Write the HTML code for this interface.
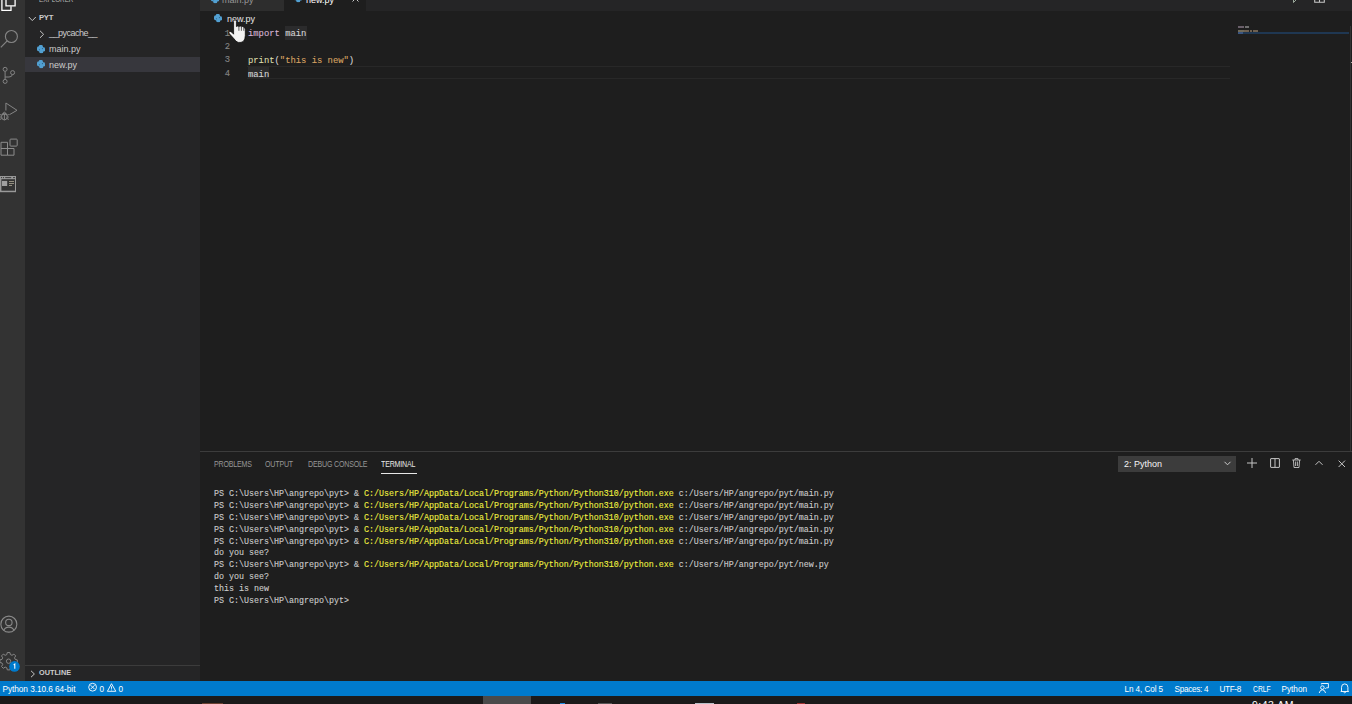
<!DOCTYPE html>
<html><head><meta charset="utf-8">
<style>
*{margin:0;padding:0;box-sizing:border-box}
html,body{width:1352px;height:704px;overflow:hidden;background:#1e1e1e}
body{position:relative;font-family:"Liberation Sans",sans-serif;color:#cccccc}
.a{position:absolute}
.t{position:absolute;white-space:pre;line-height:1}
.mono{font-family:"Liberation Mono",monospace;-webkit-text-stroke:0.1px}
svg{position:absolute;overflow:visible}
</style></head><body>

<!-- activity bar -->
<div class="a" style="left:0;top:0;width:25px;height:681px;background:#333333"></div>

<!-- sidebar -->
<div class="a" style="left:25px;top:0;width:175px;height:681px;background:#252526"></div>
<div class="t" style="left:39px;top:-4.2px;font-size:8px;color:#bbbbbb;letter-spacing:0px;transform:scaleX(0.79);transform-origin:0 0">EXPLORER</div>
<!-- PYT -->
<svg style="left:28px;top:16px" width="9" height="6" viewBox="0 0 9 6"><path d="M0.8 1 L4.3 4.6 L7.8 1" fill="none" stroke="#c5c5c5" stroke-width="1"/></svg>
<div class="t" style="left:39px;top:13.9px;font-size:7.7px;font-weight:bold;letter-spacing:-0.3px;color:#cccccc">PYT</div>
<!-- pycache -->
<svg style="left:39px;top:30px" width="6" height="9" viewBox="0 0 6 9"><path d="M1 0.8 L4.6 4.3 L1 7.8" fill="none" stroke="#c5c5c5" stroke-width="1"/></svg>
<div class="t" style="left:49px;top:29.3px;font-size:9px;letter-spacing:-0.5px">__pycache__</div>
<!-- main.py -->
<div class="t" style="left:49px;top:45.2px;font-size:9px">main.py</div>
<div class="a" style="left:25px;top:56.5px;width:175px;height:15.5px;background:#37373d"></div>
<div class="t" style="left:49px;top:60.7px;font-size:9px">new.py</div>

<!-- outline header -->
<div class="a" style="left:25px;top:665px;width:175px;height:1px;background:#3c3c3c"></div>
<svg style="left:30px;top:670px" width="6" height="9" viewBox="0 0 6 9"><path d="M1 0.8 L4.4 4 L1 7.2" fill="none" stroke="#c5c5c5" stroke-width="1"/></svg>
<div class="t" style="left:39px;top:669.2px;font-size:7.3px;font-weight:bold;color:#cccccc">OUTLINE</div>

<!-- editor tab bar -->
<div class="a" style="left:200px;top:0;width:1152px;height:10.5px;background:#252526"></div>
<div class="a" style="left:200px;top:0;width:83.5px;height:10.5px;background:#2d2d2d"></div>
<div class="a" style="left:283.5px;top:0;width:82px;height:10.5px;background:#1e1e1e"></div>
<div class="t" style="left:222px;top:-3.8px;font-size:9px;color:#969696">main.py</div>
<div class="t" style="left:306px;top:-3.8px;font-size:9px;color:#ffffff">new.py</div>

<!-- breadcrumbs -->
<div class="t" style="left:227px;top:15px;font-size:9px;color:#e6e6e6">new.py</div>

<!-- code -->
<div class="a" style="left:247px;top:66px;width:983px;height:13px;border-top:1px solid #282828;border-bottom:1px solid #282828"></div>
<div class="a" style="left:285px;top:26.2px;width:22px;height:13.4px;background:#2b2b2c"></div>
<div class="a" style="left:248px;top:66.8px;width:21px;height:11.6px;background:#2b2b2c"></div>
<div class="mono a" style="left:200px;top:27.6px;width:30px;font-size:8.85px;line-height:13.4px;text-align:right;color:#858585;white-space:pre">1
2
3
4</div>
<div class="mono a" style="left:248px;top:28.3px;font-size:8.85px;line-height:13.4px;color:#d4d4d4;white-space:pre"><span style="color:#d8b4d6">import</span> <span style="color:#d4d4d4">main</span>

<span style="color:#dcdcaa">print</span>(<span style="color:#d8a262">"this is new"</span>)
main</div>

<!-- minimap -->
<div class="a" style="left:1238px;top:26px;width:6px;height:2px;background:#6a5f6a"></div>
<div class="a" style="left:1245px;top:26px;width:4px;height:2px;background:#6f6f6f"></div>
<div class="a" style="left:1238px;top:29.7px;width:6px;height:2.2px;background:#6f6a5a"></div>
<div class="a" style="left:1244px;top:29.7px;width:5px;height:2.2px;background:#6e6050"></div>
<div class="a" style="left:1250px;top:29.7px;width:2px;height:2.2px;background:#6e6050"></div>
<div class="a" style="left:1253px;top:29.7px;width:5px;height:2.2px;background:#6e6050"></div>
<div class="a" style="left:1238px;top:32px;width:111px;height:1.9px;background:#1f3752"></div>
<div class="a" style="left:1238px;top:32px;width:5px;height:1.9px;background:#3a5580"></div>
<div class="a" style="left:1350px;top:26px;width:1.4px;height:425px;background:#333333"></div>
<div class="a" style="left:1350.8px;top:61.8px;width:1.2px;height:1.4px;background:#b0b0a8"></div>

<!-- panel -->
<div class="a" style="left:200px;top:451px;width:1152px;height:1px;background:#3c3c3c"></div>
<div class="t" style="left:214px;top:460.2px;font-size:8.3px;letter-spacing:-0.2px;transform:scaleX(0.85);transform-origin:0 0;color:#969696">PROBLEMS</div>
<div class="t" style="left:265px;top:460.2px;font-size:8.3px;letter-spacing:-0.2px;transform:scaleX(0.85);transform-origin:0 0;color:#969696">OUTPUT</div>
<div class="t" style="left:308px;top:460.2px;font-size:8.3px;letter-spacing:-0.2px;transform:scaleX(0.85);transform-origin:0 0;color:#969696">DEBUG CONSOLE</div>
<div class="t" style="left:381px;top:460.2px;font-size:8.3px;letter-spacing:-0.2px;transform:scaleX(0.85);transform-origin:0 0;color:#e7e7e7">TERMINAL</div>
<div class="a" style="left:381px;top:472.5px;width:36px;height:1.4px;background:#e7e7e7"></div>

<div class="a" style="left:1118px;top:456px;width:118px;height:16px;background:#3c3c3c"></div>
<div class="t" style="left:1124px;top:460.2px;font-size:9px;color:#f4f4f4">2: Python</div>

<!-- terminal -->
<div class="mono a" style="left:214px;top:489px;font-size:8.33px;line-height:11.88px;color:#cccccc;white-space:pre">PS C:\Users\HP\angrepo\pyt&gt; &amp; <span style="color:#f0f040">C:/Users/HP/AppData/Local/Programs/Python/Python310/python.exe</span> c:/Users/HP/angrepo/pyt/main.py
PS C:\Users\HP\angrepo\pyt&gt; &amp; <span style="color:#f0f040">C:/Users/HP/AppData/Local/Programs/Python/Python310/python.exe</span> c:/Users/HP/angrepo/pyt/main.py
PS C:\Users\HP\angrepo\pyt&gt; &amp; <span style="color:#f0f040">C:/Users/HP/AppData/Local/Programs/Python/Python310/python.exe</span> c:/Users/HP/angrepo/pyt/main.py
PS C:\Users\HP\angrepo\pyt&gt; &amp; <span style="color:#f0f040">C:/Users/HP/AppData/Local/Programs/Python/Python310/python.exe</span> c:/Users/HP/angrepo/pyt/main.py
PS C:\Users\HP\angrepo\pyt&gt; &amp; <span style="color:#f0f040">C:/Users/HP/AppData/Local/Programs/Python/Python310/python.exe</span> c:/Users/HP/angrepo/pyt/main.py
do you see?
PS C:\Users\HP\angrepo\pyt&gt; &amp; <span style="color:#f0f040">C:/Users/HP/AppData/Local/Programs/Python/Python310/python.exe</span> c:/Users/HP/angrepo/pyt/new.py
do you see?
this is new
PS C:\Users\HP\angrepo\pyt&gt;</div>

<!-- icons -->
<svg width="0" height="0" style="left:0;top:0"><defs>
<symbol id="py" viewBox="0 0 8 8.4">
<g fill="#52a0d2"><rect x="1.8" y="0" width="4" height="4.4" rx="1.3"/><rect x="0" y="1.6" width="4.6" height="4.6" rx="1.4"/><rect x="3.4" y="2.2" width="4.6" height="4.4" rx="1.4"/><rect x="2.3" y="4" width="3.9" height="4.3" rx="1.3"/><rect x="2.2" y="1.8" width="3.8" height="4.8"/></g>
<circle cx="2.4" cy="4.8" r="0.55" fill="#2a5a7e"/><circle cx="5.4" cy="3.6" r="0.55" fill="#2a5a7e"/>
</symbol>
</defs></svg>
<svg style="left:36.8px;top:44.8px" width="8" height="8.4"><use href="#py"/></svg>
<svg style="left:36.8px;top:60.3px" width="8" height="8.4"><use href="#py"/></svg>
<svg style="left:214.2px;top:13.8px" width="8" height="8.4"><use href="#py"/></svg>
<svg style="left:210.5px;top:-5px" width="8" height="8.4"><use href="#py"/></svg>
<svg style="left:294px;top:-6.3px" width="8" height="8.4"><use href="#py"/></svg>
<!-- tab close -->
<svg style="left:352px;top:-5.5px" width="7" height="7" viewBox="0 0 7 7"><path d="M0.5 0.5 L6.5 6.5 M6.5 0.5 L0.5 6.5" stroke="#cccccc" stroke-width="1"/></svg>
<!-- top right run & split -->
<svg style="left:1293px;top:-6px" width="5" height="9" viewBox="0 0 5 9"><path d="M0.5 0.5 L4.5 4.5 L0.5 8.5 Z" fill="none" stroke="#a8b8a8" stroke-width="0.9"/></svg>
<svg style="left:1314px;top:-8px" width="11" height="11" viewBox="0 0 11 11"><path d="M0.7 0.7 H10.3 V10.3 H0.7 Z M5.5 0.7 V10.3" fill="none" stroke="#c5c5c5" stroke-width="1.1"/></svg>

<!-- activity bar icons -->
<svg style="left:0;top:0" width="18" height="12" viewBox="0 0 18 12"><path d="M1.9 -2 V10.4 H11 V6.3" fill="none" stroke="#ffffff" stroke-width="1.3"/><path d="M6 -2 V5.9 H15.1 V-2" fill="none" stroke="#ffffff" stroke-width="1.3"/></svg>
<svg style="left:0;top:29px" width="19" height="20" viewBox="0 0 19 20"><circle cx="11.4" cy="7.5" r="6" fill="none" stroke="#858585" stroke-width="1.1"/><path d="M7.2 11.8 L0.8 18.4" stroke="#858585" stroke-width="1.2"/></svg>
<svg style="left:0;top:65px" width="17" height="20" viewBox="0 0 17 20"><g fill="none" stroke="#858585" stroke-width="1"><circle cx="5.1" cy="4.3" r="2"/><circle cx="12.6" cy="7.6" r="2"/><circle cx="5.1" cy="16.4" r="2"/><path d="M5.1 6.3 V14.4 M12.4 9.6 Q12 12 9 12 H5.1"/></g></svg>
<svg style="left:0;top:101px" width="19" height="21" viewBox="0 0 19 21"><g fill="none" stroke="#858585" stroke-width="1"><path d="M5.9 9.5 V2 L17 9.3 L9.4 13.7"/><path d="M2.6 12.6 Q4.4 9.8 6.2 12.6"/><ellipse cx="4.4" cy="15.6" rx="2.8" ry="3.4"/><path d="M0 13.6 L1.7 14.2 M0 16 H1.6 M0 18.4 L1.8 17.6 M8.8 13.6 L7.1 14.2 M8.8 16 H7.2 M8.8 18.4 L7 17.6 M4.4 13 V18.8 M1.8 13.3 H7"/></g></svg>
<svg style="left:0;top:138px" width="19" height="19" viewBox="0 0 19 19"><g fill="none" stroke="#8c8c8c" stroke-width="1"><path d="M1 4.3 H7.5 V17.2 H1 Z M1 10.5 H14 V17.2 H7.5"/><rect x="10" y="1.1" width="7.2" height="7" rx="0.8"/></g></svg>
<svg style="left:0;top:175px" width="17" height="18" viewBox="0 0 17 18"><rect x="0" y="1" width="16" height="16.2" fill="#999999"/><rect x="1.4" y="4.2" width="13.6" height="11.5" fill="#333333"/><rect x="2" y="5.9" width="5.2" height="5.1" fill="#a0a0a0"/><g fill="#a09a8a"><rect x="9" y="6.1" width="5" height="0.9"/><rect x="9" y="8.1" width="5" height="0.9"/><rect x="9" y="10.1" width="3" height="0.9"/></g><g fill="#333"><circle cx="1.5" cy="2.6" r="0.6"/><circle cx="3.5" cy="2.6" r="0.6"/><rect x="5.2" y="2.2" width="6" height="0.9"/><rect x="13" y="2.2" width="2" height="0.9"/></g></svg>
<svg style="left:0;top:615px" width="18" height="19" viewBox="0 0 18 19"><g fill="none" stroke="#8a8a8a" stroke-width="1.1"><circle cx="8.85" cy="9.15" r="8"/><circle cx="8.85" cy="7.4" r="3.2"/><path d="M3.6 15.6 Q5 12.1 8.85 12.1 Q12.7 12.1 14.1 15.6"/></g></svg>
<svg style="left:0;top:651px" width="20" height="21" viewBox="0 0 20 21"><g fill="none" stroke="#858585" stroke-width="1"><path d="M7.3 1.5 H9.9 L10.4 3.6 L12 4.3 L13.9 3.1 L15.7 4.9 L14.5 6.8 L15.2 8.4 L17.3 8.9 V11.5 L15.2 12 L14.5 13.6 L15.7 15.5 L13.9 17.3 L12 16.1 L10.4 16.8 L9.9 18.9 H7.3 L6.8 16.8 L5.2 16.1 L3.3 17.3 L1.5 15.5 L2.7 13.6 L2 12 L-0.1 11.5 V8.9 L2 8.4 L2.7 6.8 L1.5 4.9 L3.3 3.1 L5.2 4.3 L6.8 3.6 Z"/><circle cx="8.6" cy="10.2" r="2.2"/></g><circle cx="14.5" cy="15.4" r="5.3" fill="#007acc"/><path d="M13.6 13.9 L14.8 13.1 V17.8" stroke="#ffffff" stroke-width="1.05" fill="none"/></svg>

<!-- panel icons -->
<svg style="left:1224px;top:460.5px" width="7" height="5" viewBox="0 0 7 5"><path d="M0.5 0.8 L3.5 3.8 L6.5 0.8" fill="none" stroke="#cccccc" stroke-width="1"/></svg>
<svg style="left:1247px;top:458px" width="10" height="10" viewBox="0 0 10 10"><path d="M5 0 V10 M0 5 H10" stroke="#c5c5c5" stroke-width="1"/></svg>
<svg style="left:1270px;top:458px" width="10" height="10" viewBox="0 0 10 10"><path d="M0.6 1 Q0.6 0.6 1 0.6 H9 Q9.4 0.6 9.4 1 V9 Q9.4 9.4 9 9.4 H1 Q0.6 9.4 0.6 9 Z M5 0.6 V9.4" fill="none" stroke="#c5c5c5" stroke-width="1"/></svg>
<svg style="left:1292px;top:458px" width="9" height="10" viewBox="0 0 9 10"><path d="M0.3 2 H8.7 M3 2 V0.6 H6 V2 M1.4 2 L2 9.5 H7 L7.6 2 M3.6 3.5 V8 M5.4 3.5 V8" fill="none" stroke="#c5c5c5" stroke-width="0.9"/></svg>
<svg style="left:1315px;top:460px" width="8" height="6" viewBox="0 0 8 6"><path d="M0.5 4.8 L4 1.3 L7.5 4.8" fill="none" stroke="#c5c5c5" stroke-width="1"/></svg>
<svg style="left:1337.5px;top:460px" width="8" height="8" viewBox="0 0 8 8"><path d="M0.6 0.6 L7 7 M7 0.6 L0.6 7" fill="none" stroke="#c5c5c5" stroke-width="1"/></svg>

<!-- cursor -->
<svg style="left:228px;top:19px" width="19" height="25" viewBox="0 0 19 25"><path d="M5.6 2.4 Q5.8 0.8 7 0.8 Q8.3 0.8 8.4 2.4 L8.4 7.6 Q9.9 6.3 10.9 7.6 Q12.4 6.4 13.4 7.8 Q14.9 6.8 15.8 8.3 Q17.3 8.6 17.3 10.3 L17.3 16.5 Q17.3 20.3 15.3 22.4 Q13.2 23.9 10.2 23.4 Q7.9 22.9 6 19.8 L1.4 14.7 Q0.3 13.2 1.8 12.5 Q3 12.2 4 13.4 L5.6 15.2 Z" fill="#f2f2f2" stroke="#000000" stroke-width="0.7"/><path d="M10.9 7.8 V11.8 M13.4 8 V11.8 M15.8 8.4 V11.8" stroke="#1a1a1a" stroke-width="0.7"/></svg>

<!-- status bar -->
<div class="a" style="left:0;top:681px;width:1352px;height:15px;background:#007acc"></div>
<div class="t" style="left:2.5px;top:685.4px;font-size:8.3px;letter-spacing:-0.07px;color:#ffffff">Python 3.10.6 64-bit</div>
<svg style="left:88px;top:683.4px" width="10" height="9" viewBox="0 0 10 9"><g fill="none" stroke="#ffffff" stroke-width="0.9"><circle cx="4.6" cy="4.2" r="3.9"/><path d="M2.6 2.2 L6.6 6.2 M6.6 2.2 L2.6 6.2"/></g></svg>
<div class="t" style="left:99.5px;top:685.5px;font-size:8.2px;color:#ffffff">0</div>
<svg style="left:107px;top:683.1px" width="10" height="9" viewBox="0 0 10 9"><g fill="none" stroke="#ffffff" stroke-width="0.9"><path d="M4.5 0.7 L8.8 8.3 H0.4 Z M4.5 3.3 V5.8 M4.5 6.6 V7.4"/></g></svg>
<div class="t" style="left:118.5px;top:685.5px;font-size:8.2px;color:#ffffff">0</div>
<svg style="left:1318px;top:682px" width="12" height="12" viewBox="0 0 12 12"><g fill="none" stroke="#ffffff" stroke-width="0.9"><path d="M3.4 2.4 V1.5 H10.4 V5.8 H8.6 L7.2 6.8"/><circle cx="4.4" cy="5.6" r="1.8"/><path d="M1.2 11 Q2 7.8 4.4 7.8 Q6.8 7.8 7.6 11"/></g></svg>
<svg style="left:1340px;top:682.5px" width="10" height="11" viewBox="0 0 10 11"><g fill="none" stroke="#ffffff" stroke-width="0.9"><path d="M1.5 8 V4.3 Q1.5 0.9 4.7 0.9 Q7.9 0.9 7.9 4.3 V8 L8.6 8.5 H0.8 Z M3.6 9.2 Q4.7 10.4 5.8 9.2"/></g></svg>
<div class="t" style="left:1124.5px;top:685.8px;font-size:8.2px;letter-spacing:-0.1px;color:#ffffff">Ln 4, Col 5</div>
<div class="t" style="left:1174.5px;top:685.8px;font-size:8.2px;letter-spacing:-0.3px;color:#ffffff">Spaces: 4</div>
<div class="t" style="left:1219.5px;top:685.8px;font-size:8.2px;letter-spacing:-0.35px;color:#ffffff">UTF-8</div>
<div class="t" style="left:1252.5px;top:685.8px;font-size:8.2px;transform:scaleX(0.83);transform-origin:0 0;color:#ffffff">CRLF</div>
<div class="t" style="left:1281.5px;top:685.8px;font-size:8.2px;color:#ffffff">Python</div>

<!-- taskbar -->
<div class="a" style="left:0;top:696px;width:1352px;height:8px;background:#1c1a1a"></div>
<div class="a" style="left:483px;top:696px;width:48px;height:8px;background:#4a4a4a"></div>
<div class="a" style="left:202px;top:702.5px;width:21px;height:2px;background:#6a4030"></div>
<div class="a" style="left:559.5px;top:702.5px;width:5px;height:2px;background:#1a8ae0"></div>
<div class="a" style="left:598px;top:703px;width:14px;height:1px;background:#555555"></div>
<div class="a" style="left:695px;top:702.5px;width:19px;height:2px;background:#b8c0c8"></div>
<div class="a" style="left:797px;top:703px;width:8px;height:1px;background:#a03030"></div>
<div class="t" style="left:1252px;top:700.3px;font-size:10.5px;letter-spacing:0.5px;color:#ffffff">9:43 AM</div>

</body></html>
